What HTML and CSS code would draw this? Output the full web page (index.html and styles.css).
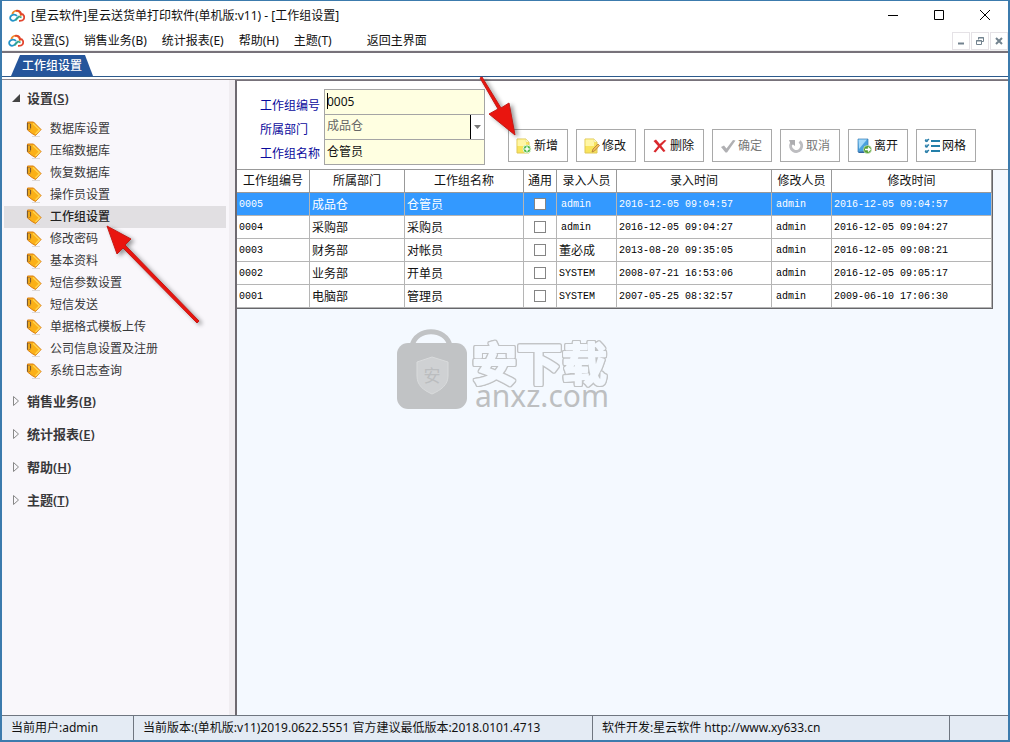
FILE: index.html
```html
<!DOCTYPE html>
<html lang="zh-CN">
<head>
<meta charset="utf-8">
<title>[星云软件]星云送货单打印软件(单机版:v11) - [工作组设置]</title>
<link rel="stylesheet" href="styles.css">
</head>
<body>
<svg class="sprite" aria-hidden="true">
  <symbol id="cloud" viewBox="0 0 16 16">
    <path d="M3.500 6.500C3.500 3 8 1.500 10.500 4C12 5.500 12 7 11.500 8" fill="none" stroke="#f08a2a" stroke-width="1.800"/>
    <path d="M7 3C9.500 1.800 12 4 12 6C15 6 16 9 14.500 11.500C13.500 13 11.500 12.800 10 12.800" fill="none" stroke="#e2452e" stroke-width="1.800"/>
    <path d="M8 8C6.500 6 3 6 1.500 8.500C.5 11 2 12.800 4 12.800C6.500 12.800 7.500 10.500 9 9" fill="none" stroke="#2293c9" stroke-width="1.800"/>
    <path d="M6.500 12.500L10 8.500L12.500 9.500" fill="none" stroke="#35a68a" stroke-width="1.600"/>
  </symbol>
  <symbol id="tag" viewBox="0 0 16 16">
    <path d="M6 15.500H14" stroke="#ddd8d6" stroke-width="1" fill="none"/>
    <path d="M1.500 1H7.500L15 8.500L9.500 14.500L6 12.500L1.500 9Z" fill="#fbb017" stroke="#d87d12"/>
    <path d="M7 2.500L13.500 8.800L9.500 13" fill="none" stroke="#ffd34d" stroke-width="1.500"/>
    <path d="M1.500 2V8.500M4.500 3V7.500" fill="none" stroke="#7d5a2d" stroke-width="1.200"/>
    <path d="M2 2.500H4.500M2.500 8.500H4.500" fill="none" stroke="#b98532"/>
  </symbol>
  <symbol id="note" viewBox="0 0 16 16">
    <path d="M1 1H10L13 4V15H1Z" fill="#f9e45c" stroke="#dfc757"/>
    <path d="M1.500 1.500H10V8H1.500Z" fill="#fff6a6"/>
    <path d="M10 1V4H13Z" fill="#fffbe0" stroke="#e3d77e" stroke-width=".5"/>
  </symbol>
  <symbol id="add" viewBox="0 0 16 16">
    <use href="#note"/>
    <circle cx="11" cy="11" r="4" fill="#57bd50" stroke="#e4f5d7"/>
    <path d="M11 8.500V13.500M8.500 11H13.500" stroke="#fff" stroke-width="1.500"/>
  </symbol>
  <symbol id="edit" viewBox="0 0 16 16">
    <use href="#note"/>
    <path d="M8 14L9 11L14 6L15.500 7.500L10.500 13Z" fill="#f3bd55" stroke="#a37337" stroke-width=".7"/>
  </symbol>
  <symbol id="delete" viewBox="0 0 16 16">
    <path d="M1.500 3L4 1.500L7.800 6L12.500 2L14.500 2.500L9.300 7.800L13.500 13L11.500 14L7.600 9.500L3.500 14.500L1.500 13.500L6 8Z" fill="#d9292e"/>
  </symbol>
  <symbol id="ok" viewBox="0 0 16 16">
    <path d="M1 9L4 7.500L6.500 10.500L13 2L15.500 2.500L7 14.500H5.500Z" fill="#b0b0b3"/>
  </symbol>
  <symbol id="cancel" viewBox="0 0 16 16">
    <path d="M11.500 3.500A5.500 5.500 0 1 1 3.500 5" fill="none" stroke="#bdbdc0" stroke-width="3"/>
    <path d="M1 2H7V8L5 6.500L3 7Z" fill="#adadb0"/>
  </symbol>
  <symbol id="leave" viewBox="0 0 16 16">
    <path d="M2 1H12V13L2 14Z" fill="#4aa2df" stroke="#3a7bb3" stroke-width=".7"/>
    <path d="M2.500 1.500H11L3 11Z" fill="#a5dafa"/>
    <path d="M2 14L10 13V15H3Z" fill="#3465a0"/>
    <circle cx="11.500" cy="11.500" r="4" fill="#559f32" stroke="#d6ecc9" stroke-width=".7"/>
    <path d="M9 11.500H14M12 9.500L14 11.500L12 13.500" fill="none" stroke="#fff" stroke-width="1.400"/>
  </symbol>
  <symbol id="grid" viewBox="0 0 16 16">
    <path d="M7 3H16M7 8H16M7 13H16" stroke="#237fa9" stroke-width="2"/>
    <path d="M1 1H4V4H1ZM1 6.500H4V9.500H1ZM1 12H4V15H1Z" fill="#7db6d2"/>
    <path d="M1 2L2.500 3.500L5 1M1 7.500L2.500 9L5 6.500M1 13L2.500 14.500L5 12" fill="none" stroke="#2b7ca6" stroke-width="1.200"/>
  </symbol>
</svg>

<div class="window">
  <header class="titlebar">
    <svg class="icon"><use href="#cloud"/></svg>
    <h1 class="title">[星云软件]星云送货单打印软件(单机版:v11) - [工作组设置]</h1>
    <div class="window-controls">
      <button type="button" aria-label="最小化"><svg viewBox="0 0 12 12"><path d="M1 5.500H11"/></svg></button>
      <button type="button" aria-label="最大化"><svg viewBox="0 0 12 12"><path d="M1.500 .5H10.500V9.500H1.500Z"/></svg></button>
      <button type="button" aria-label="关闭"><svg viewBox="0 0 12 12"><path d="M1 0L11 10M11 0L1 10"/></svg></button>
    </div>
  </header>

  <nav class="menubar">
    <svg class="icon"><use href="#cloud"/></svg>
    <button type="button">设置(S)</button>
    <button type="button">销售业务(B)</button>
    <button type="button">统计报表(E)</button>
    <button type="button">帮助(H)</button>
    <button type="button">主题(T)</button>
    <button type="button" class="home">返回主界面</button>
    <div class="child-controls">
      <button type="button" aria-label="最小化子窗口"><svg viewBox="0 0 10 10"><path d="M2 7.500H8" stroke-width="2"/></svg></button>
      <button type="button" aria-label="还原子窗口"><svg viewBox="0 0 10 10"><path d="M3.500 3.500V1.500H8.500V5.500H7M1.500 4.500H6.500V8.500H1.500ZM3 2H9M1 5H7"/></svg></button>
      <button type="button" aria-label="关闭子窗口"><svg viewBox="0 0 10 10"><path d="M2 2L8 8M8 2L2 8" stroke-width="2"/></svg></button>
    </div>
  </nav>

  <div class="tabs"><button type="button" class="tab"><span>工作组设置</span></button></div>

  <div class="workspace">
    <aside class="sidebar">
      <button type="button" class="group"><svg viewBox="0 0 8 10"><path d="M8 1V9H0Z" fill="#444"/></svg><span>设置(<u>S</u>)</span></button>
      <ul class="items">
        <li><a href="#"><svg class="icon"><use href="#tag"/></svg>数据库设置</a></li>
        <li><a href="#"><svg class="icon"><use href="#tag"/></svg>压缩数据库</a></li>
        <li><a href="#"><svg class="icon"><use href="#tag"/></svg>恢复数据库</a></li>
        <li><a href="#"><svg class="icon"><use href="#tag"/></svg>操作员设置</a></li>
        <li><a href="#" class="current"><svg class="icon"><use href="#tag"/></svg>工作组设置</a></li>
        <li><a href="#"><svg class="icon"><use href="#tag"/></svg>修改密码</a></li>
        <li><a href="#"><svg class="icon"><use href="#tag"/></svg>基本资料</a></li>
        <li><a href="#"><svg class="icon"><use href="#tag"/></svg>短信参数设置</a></li>
        <li><a href="#"><svg class="icon"><use href="#tag"/></svg>短信发送</a></li>
        <li><a href="#"><svg class="icon"><use href="#tag"/></svg>单据格式模板上传</a></li>
        <li><a href="#"><svg class="icon"><use href="#tag"/></svg>公司信息设置及注册</a></li>
        <li><a href="#"><svg class="icon"><use href="#tag"/></svg>系统日志查询</a></li>
      </ul>
      <button type="button" class="group"><svg viewBox="0 0 8 10"><path d="M1.500 .5L6.500 5L1.500 9.500Z" fill="none" stroke="#888"/></svg><span>销售业务(<u>B</u>)</span></button>
      <button type="button" class="group"><svg viewBox="0 0 8 10"><path d="M1.500 .5L6.500 5L1.500 9.500Z" fill="none" stroke="#888"/></svg><span>统计报表(<u>E</u>)</span></button>
      <button type="button" class="group"><svg viewBox="0 0 8 10"><path d="M1.500 .5L6.500 5L1.500 9.500Z" fill="none" stroke="#888"/></svg><span>帮助(<u>H</u>)</span></button>
      <button type="button" class="group"><svg viewBox="0 0 8 10"><path d="M1.500 .5L6.500 5L1.500 9.500Z" fill="none" stroke="#888"/></svg><span>主题(<u>T</u>)</span></button>
    </aside>

    <main class="main">
      <form class="panel">
        <div class="labels">
          <label for="code">工作组编号</label>
          <label for="dept">所属部门</label>
          <label for="name">工作组名称</label>
        </div>
        <div class="fields">
          <div class="field"><input id="code" type="text" value="0005"><i class="caret"></i></div>
          <div class="field"><select id="dept"><option>成品仓</option></select><span class="drop"><svg viewBox="0 0 7 4"><path d="M0 0H7L3.500 4Z" fill="#777"/></svg></span></div>
          <div class="field"><input id="name" type="text" value="仓管员"></div>
        </div>
        <div class="tools">
          <button type="button"><svg class="icon"><use href="#add"/></svg>新增</button>
          <button type="button"><svg class="icon"><use href="#edit"/></svg>修改</button>
          <button type="button"><svg class="icon"><use href="#delete"/></svg>删除</button>
          <button type="button" disabled><svg class="icon"><use href="#ok"/></svg>确定</button>
          <button type="button" disabled><svg class="icon"><use href="#cancel"/></svg>取消</button>
          <button type="button"><svg class="icon"><use href="#leave"/></svg>离开</button>
          <button type="button"><svg class="icon"><use href="#grid"/></svg>网格</button>
        </div>
      </form>

      <table class="records">
        <colgroup><col class="c-code"><col class="c-dept"><col class="c-name"><col class="c-flag"><col class="c-user"><col class="c-time"><col class="c-user"><col class="c-last"></colgroup>
        <thead><tr><th>工作组编号</th><th>所属部门</th><th>工作组名称</th><th>通用</th><th>录入人员</th><th>录入时间</th><th>修改人员</th><th>修改时间</th></tr></thead>
        <tbody>
          <tr class="selected"><td class="mono">0005</td><td>成品仓</td><td>仓管员</td><td class="flag"><input type="checkbox" aria-label="通用 0005"></td><td class="mono user">admin</td><td class="mono">2016-12-05 09:04:57</td><td class="mono user">admin</td><td class="mono">2016-12-05 09:04:57</td></tr>
          <tr><td class="mono">0004</td><td>采购部</td><td>采购员</td><td class="flag"><input type="checkbox" aria-label="通用 0004"></td><td class="mono user">admin</td><td class="mono">2016-12-05 09:04:27</td><td class="mono user">admin</td><td class="mono">2016-12-05 09:04:27</td></tr>
          <tr><td class="mono">0003</td><td>财务部</td><td>对帐员</td><td class="flag"><input type="checkbox" aria-label="通用 0003"></td><td>董必成</td><td class="mono">2013-08-20 09:35:05</td><td class="mono user">admin</td><td class="mono">2016-12-05 09:08:21</td></tr>
          <tr><td class="mono">0002</td><td>业务部</td><td>开单员</td><td class="flag"><input type="checkbox" aria-label="通用 0002"></td><td class="mono">SYSTEM</td><td class="mono">2008-07-21 16:53:06</td><td class="mono user">admin</td><td class="mono">2016-12-05 09:05:17</td></tr>
          <tr><td class="mono">0001</td><td>电脑部</td><td>管理员</td><td class="flag"><input type="checkbox" aria-label="通用 0001"></td><td class="mono">SYSTEM</td><td class="mono">2007-05-25 08:32:57</td><td class="mono user">admin</td><td class="mono">2009-06-10 17:06:30</td></tr>
        </tbody>
      </table>
    </main>
  </div>

  <footer class="statusbar">
    <span>当前用户:admin</span>
    <span>当前版本:(单机版:v11)2019.0622.5551 官方建议最低版本:2018.0101.4713</span>
    <span>软件开发:星云软件 http://www.xy633.cn</span>
    <span></span>
  </footer>
</div>

<svg class="watermark" viewBox="0 0 220 84">
  <path d="M17 18C21 -1 51 -1 55 18" fill="none" stroke="#c1c3c5" stroke-width="5"/>
  <rect x="2" y="15" width="70" height="66" rx="11" fill="#c1c3c5"/>
  <path d="M22 34L37 29L53 34V48C53 57 46 62 37 66C28 62 22 57 22 48Z" fill="#cfd1d3" stroke="#d9dbdc"/>
  <text x="37" y="54" class="seal">安</text>
  <text x="77" y="53" class="brand">安下载</text>
  <text x="80" y="79" class="domain">anxz.com</text>
</svg>
<svg class="pointer pointer-add" viewBox="0 0 50 70"><path d="M4 4L6 3L25 34L33 29L39 61L13 40L22 35Z"/></svg>
<svg class="pointer pointer-menu" viewBox="0 0 104 108"><path d="M6 5L30 18L24 24L98 100L96 102L22 27L16 33Z"/></svg>
</body>
</html>
```

FILE: styles.css
```css
* { box-sizing: border-box; }

body {
  margin: 0;
  position: relative;
  font: 12px/16px "Noto Sans", "Noto Sans CJK SC", sans-serif;
  color: #111;
  overflow: hidden;
}

button {
  font: inherit;
  color: inherit;
  background: none;
  border: 0;
  padding: 0;
  white-space: nowrap;
}

.sprite { position: absolute; width: 0; height: 0; }
.icon { width: 16px; height: 16px; flex: none; }

.window {
  display: flex;
  flex-direction: column;
  height: 100vh;
  background: #fff;
  border: 2px solid #3c7bad;
  border-top-width: 1px;
}

.titlebar { display: flex; align-items: center; height: 30px; padding-left: 7px; }
.title { margin: 0 0 0 6px; font-size: 12px; font-weight: 400; white-space: nowrap; }
.window-controls { display: flex; margin-left: auto; }
.window-controls button { width: 46px; height: 28px; display: grid; place-items: center; }
.window-controls svg { width: 12px; height: 12px; fill: none; stroke: #000; }

.menubar {
  display: flex;
  align-items: center;
  gap: 15px;
  height: 20px;
  padding-left: 6px;
  border-bottom: 1px solid #eee;
}
.menubar > .icon { margin-right: -8px; }
.menubar .home { margin-left: 20px; }
.child-controls { display: flex; gap: 1px; margin-left: auto; }
.child-controls button {
  width: 18px;
  height: 18px;
  display: grid;
  place-items: center;
  border: 1px solid #e5e2e6;
}
.child-controls svg { width: 10px; height: 10px; fill: none; stroke: #73838f; }

.tabs {
  display: flex;
  align-items: flex-end;
  height: 26px;
  padding-left: 9px;
  border-top: 2px solid #77727a;
  border-bottom: 1px solid #2c5a8c;
}
.tab {
  width: 82px;
  height: 21px;
  color: #fff;
  font-weight: 500;
  background: #25559b;
  clip-path: polygon(0 100%, 9px 0, 74px 0, 100% 100%);
}

.workspace {
  display: flex;
  flex: 1;
  min-height: 0;
  margin-top: 2px;
  border-top: 1px solid #8c878e;
}

.sidebar {
  flex: none;
  width: 233px;
  padding: 1px 3px 0 2px;
  color: #38383a;
  background: #f9f7fb;
  border-right: 6px solid #f0edf1;
}
.group {
  display: flex;
  align-items: center;
  gap: 7px;
  width: 100%;
  height: 33px;
  padding-left: 8px;
  font-size: 13px;
  font-weight: 600;
}
.group svg { width: 8px; height: 10px; }
.items { list-style: none; margin: 4px 0 2px; padding: 0; }
.items a {
  display: flex;
  align-items: center;
  gap: 8px;
  height: 22px;
  padding-left: 22px;
  color: inherit;
  text-decoration: none;
}
.items .current { font-weight: 500; background: #e1dfe2; color: #222; }

.main {
  flex: 1;
  min-width: 0;
  background: #f4f9ff;
  border-top: 1px solid #77727a;
  border-left: 2px solid #6e6a70;
}

.panel {
  display: flex;
  align-items: flex-start;
  height: 89px;
  padding: 8px 0 0 23px;
  background: #fff;
  border-bottom: 1px solid #999;
}
.labels { display: grid; width: 64px; grid-auto-rows: 24px; padding-top: 5px; color: #0a0a9c; }
.labels label { line-height: 24px; }
.fields { width: 161px; }
.field { position: relative; display: flex; height: 25px; }
.field input,
.field select {
  width: 100%;
  height: 26px;
  margin: 0;
  padding: 0 2px 2px;
  font: inherit;
  color: #111;
  background: #ffffe1;
  border: 1px solid #a5a5a5;
  border-radius: 0;
  appearance: none;
  outline: 0;
}
.field select { color: #666; }
.drop {
  position: absolute;
  top: 1px;
  right: 1px;
  bottom: 0;
  width: 14px;
  display: grid;
  place-items: center;
  background: #fff;
  border-left: 1px solid #000;
  pointer-events: none;
}
.drop svg { width: 7px; height: 4px; }
.caret { position: absolute; left: 3px; top: 4px; width: 1px; height: 16px; background: #000; }

.tools { display: flex; gap: 8px; padding: 40px 0 0 23px; }
.tools button {
  display: flex;
  align-items: center;
  gap: 2px;
  width: 60px;
  height: 33px;
  padding-left: 7px;
  background: #fff;
  border: 1px solid #a9a9a9;
}
.tools button:disabled { color: #777; }

.records {
  table-layout: fixed;
  width: 756px;
  background: #fff;
  border-spacing: 0;
  border-right: 1px solid #66666a;
  border-bottom: 1px solid #66666a;
}
.c-code { width: 73px; }
.c-dept { width: 95px; }
.c-name { width: 119px; }
.c-flag { width: 33px; }
.c-user { width: 60px; }
.c-time { width: 155px; }
.records th,
.records td {
  height: 23px;
  padding: 1px 2px 0;
  text-align: left;
  font-weight: 400;
  white-space: nowrap;
  border-right: 1px solid #b5b5b5;
  border-bottom: 1px solid #b5b5b5;
}
.records th { padding: 0; text-align: center; border-color: #999; }
.records .mono { padding-top: 2px; font-family: "Liberation Mono", monospace; font-size: 10px; color: #000; }
.records .user { padding-left: 4px; }
.records .selected td { color: #fff; background: #3399ff; }
.records .flag { padding: 0; text-align: center; }
.flag input {
  display: block;
  width: 12px;
  height: 12px;
  margin: 0 auto;
  appearance: none;
  background: #fff;
  border: 1px solid #858585;
}

.statusbar {
  display: grid;
  grid-template-columns: 132px 459px 357px 1fr;
  height: 25px;
  background: #e4ebf4;
  border-top: 1px solid #6f7680;
}
.statusbar span { padding-left: 9px; line-height: 24px; white-space: nowrap; border-right: 1px solid #6f7680; }
.statusbar span:last-child { border-right: 0; }

.watermark { position: absolute; left: 395px; top: 328px; width: 220px; height: 84px; overflow: visible; font-family: "Noto Sans", "Noto Sans CJK SC", sans-serif; }
.seal { font-size: 17px; text-anchor: middle; fill: #bbbdbf; }
.brand {
  font-size: 45px;
  font-weight: 700;
  fill: #f4f9ff;
  stroke: #f4f9ff;
  stroke-width: 2px;
  stroke-linejoin: round;
  filter: drop-shadow(1px 0 0 #c1c3c5) drop-shadow(-1px 0 0 #c1c3c5) drop-shadow(0 1px 0 #c1c3c5) drop-shadow(0 -1px 0 #c1c3c5);
}
.domain { font-size: 30px; fill: #bdbfc1; }

.pointer { position: absolute; pointer-events: none; fill: #e9150f; stroke: #c41a16; stroke-width: 1px; filter: drop-shadow(3px 2px 2px #0006); }
.pointer-add { left: 476px; top: 74px; width: 50px; height: 70px; }
.pointer-menu { left: 101px; top: 221px; width: 104px; height: 108px; }
```
